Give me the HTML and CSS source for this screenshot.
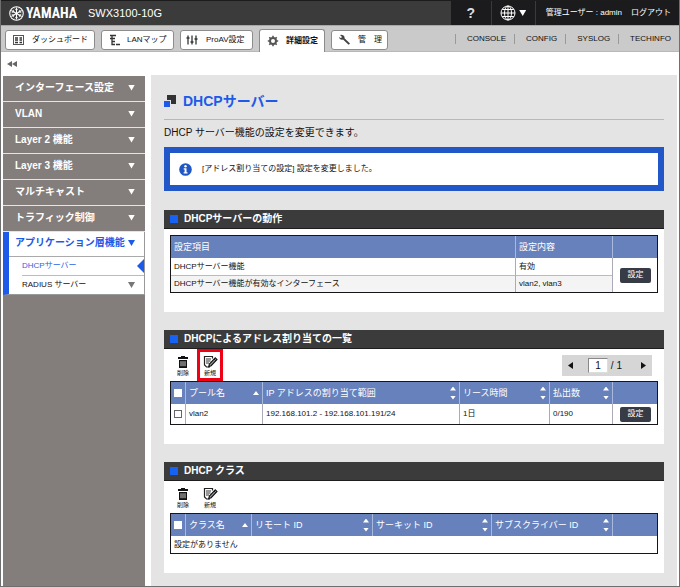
FILE: index.html
```html
<!DOCTYPE html>
<html lang="ja">
<head>
<meta charset="utf-8">
<title>SWX3100-10G DHCPサーバー</title>
<link rel="stylesheet" href="styles.css">
</head>
<body>
<svg class="defs" width="0" height="0" aria-hidden="true">
  <symbol id="trash" viewBox="0 0 12 12">
    <path d="M4 1V0h4v1h3v2H1V1z" fill="#111"/>
    <path d="M2 4h8v8H2z" fill="#111"/>
    <path d="M4 5.200v5M6 5.200v5M8 5.200v5" stroke="#fff" stroke-width=".8"/>
  </symbol>
  <symbol id="edit" viewBox="0 0 15 12">
    <path d="M9.500 2.500v-2h-8v8.500l2 2H7" fill="none" stroke="#222" stroke-width="1.200"/>
    <path d="M3 3h5M3 5h4.500M3 7h3" stroke="#333"/>
    <path d="M12.300 1.800l1.700 1.700-5.900 6.200-2.400.9.700-2.600z" fill="#999" stroke="#111" stroke-width="1.100"/>
    <path d="M11 3l1.800 1.800" stroke="#111"/>
  </symbol>
</svg>

<header class="topbar">
  <div class="brand">
    <svg class="brand-mark" viewBox="0 0 14 14" aria-hidden="true">
      <g fill="none" stroke="#fff">
        <circle cx="7" cy="7" r="6.300" stroke-width="1"/>
        <path d="M7 1.500v11M2.200 4.200l9.600 5.600M2.200 9.800l9.600-5.600" stroke-width="1"/>
        <path d="M5.500 2.500L7 4l1.500-1.500M5.500 11.500L7 10l1.500 1.500M2.500 6.200l2-.6-.4-2M11.500 6.200l-2-.6.4-2M2.500 7.800l2 .6-.4 2M11.500 7.800l-2 .6.4 2" stroke-width=".7"/>
      </g>
    </svg>
    <span class="brand-name">YAMAHA</span>
    <span class="model">SWX3100-10G</span>
  </div>
  <div class="tools">
    <button class="tool help" type="button" aria-label="ヘルプ">?</button>
    <button class="tool lang" type="button" aria-label="言語">
      <svg width="16" height="16" viewBox="0 0 16 16" fill="none" stroke="#fff" aria-hidden="true">
        <circle cx="8" cy="8" r="7"/><ellipse cx="8" cy="8" rx="3.500" ry="7"/>
        <path d="M8 1v14M1 8h14M2.200 4.500h11.600M2.200 11.500h11.600"/>
      </svg>
      <span class="tri down"></span>
    </button>
    <div class="user"><span>管理ユーザー : admin</span><a href="#">ログアウト</a></div>
  </div>
</header>

<nav class="tabs">
  <button class="tab dash" type="button">
    <svg width="12" height="12" viewBox="0 0 12 12" aria-hidden="true"><rect x=".5" y="1.500" width="10" height="9" fill="none" stroke="#555"/><path d="M2 4h3M6.500 4H9M2 6h3M6.500 6H9M2 8.500h3M6.500 8.500H9" stroke="#333" stroke-width="1.400"/></svg>
    ダッシュボード
  </button>
  <button class="tab lan" type="button">
    <svg width="12" height="12" viewBox="0 0 12 12" aria-hidden="true"><path d="M1 1.500h6M1 4.500h5M3 1.500v9h3M3 7.500h3M7 10.500h4" fill="none" stroke="#333" stroke-width="1.300"/></svg>
    LANマップ
  </button>
  <button class="tab pro" type="button">
    <svg width="12" height="12" viewBox="0 0 12 12" aria-hidden="true"><path d="M2 1.500v9M6 1.500v9M10 1.500v9M.5 4h3M4.500 8h3M8.500 5h3" stroke="#333" stroke-width="1.300"/></svg>
    ProAV設定
  </button>
  <button class="tab detail current" type="button">
    <svg width="12" height="12" viewBox="0 0 12 12" aria-hidden="true"><circle cx="6" cy="6" r="3" fill="none" stroke="#555" stroke-width="2"/><path d="M6 .8v2M6 9.200v2M.8 6h2M9.200 6h2M2.300 2.300l1.400 1.400M8.300 8.300l1.400 1.400M2.300 9.700l1.400-1.400M8.300 3.700l1.400-1.400" stroke="#555" stroke-width="1.600"/></svg>
    詳細設定
  </button>
  <button class="tab admin" type="button">
    <svg width="12" height="12" viewBox="0 0 12 12" aria-hidden="true"><path d="M4 1.200a3 3 0 0 0-3-.2l2 2-1.200 1.300L.3 2.700C0 5 2 6.300 4 5.600l5.600 5.200 1.400-1.300-5.500-5.300c.3-1.200-.2-2.400-1.500-3z" fill="#444"/></svg>
    管　理
  </button>
  <div class="links">
    <a href="#">CONSOLE</a><a href="#">CONFIG</a><a href="#">SYSLOG</a><a href="#">TECHINFO</a>
  </div>
</nav>

<div class="strip">
  <button class="collapse" type="button" aria-label="メニューを閉じる"><span class="tri left"></span><span class="tri left"></span></button>
</div>

<div class="layout">
  <nav class="sidebar">
    <button class="menu" type="button">インターフェース設定<span class="tri down"></span></button>
    <button class="menu" type="button">VLAN<span class="tri down"></span></button>
    <button class="menu" type="button">Layer 2 機能<span class="tri down"></span></button>
    <button class="menu" type="button">Layer 3 機能<span class="tri down"></span></button>
    <button class="menu" type="button">マルチキャスト<span class="tri down"></span></button>
    <button class="menu" type="button">トラフィック制御<span class="tri down"></span></button>
    <div class="open">
      <button class="menu active" type="button">アプリケーション層機能<span class="tri down"></span></button>
      <a class="sub selected" href="#">DHCPサーバー<span class="pointer"></span></a>
      <a class="sub" href="#">RADIUS サーバー<span class="tri down"></span></a>
    </div>
  </nav>

  <main class="content">
    <h1><svg width="12" height="12" viewBox="0 0 12 12" aria-hidden="true"><path d="M3 0h9v9H3z" fill="#333"/><path d="M0 5h7v7H0z" fill="#e4e4e4"/><path d="M0 6h6v6H0z" fill="#1d5ae8"/></svg>DHCPサーバー</h1>
    <p class="lead">DHCP サーバー機能の設定を変更できます。</p>
    <div class="notice" role="status">
      <svg width="13" height="13" viewBox="0 0 13 13" aria-hidden="true"><circle cx="6.500" cy="6.500" r="6.300" fill="#1f57c4"/><circle cx="6.500" cy="3.300" r="1.200" fill="#fff"/><path d="M4.700 5.300h2.800v4h1v1.200H4.600V9.300h1V6.500h-.9z" fill="#fff"/></svg>
      [アドレス割り当ての設定] 設定を変更しました。
    </div>

    <section class="panel">
      <h2>DHCPサーバーの動作</h2>
      <div class="body spaced">
        <table>
          <colgroup><col><col class="w-value"><col class="w-action"></colgroup>
          <thead><tr><th>設定項目</th><th>設定内容</th><th></th></tr></thead>
          <tbody>
            <tr><td>DHCPサーバー機能</td><td>有効</td><td class="action" rowspan="2"><button class="set" type="button">設定</button></td></tr>
            <tr class="alt"><td>DHCPサーバー機能が有効なインターフェース</td><td>vlan2, vlan3</td></tr>
          </tbody>
        </table>
      </div>
    </section>

    <section class="panel">
      <h2>DHCPによるアドレス割り当ての一覧</h2>
      <div class="body">
        <div class="toolbar">
          <button class="icon" type="button"><svg width="12" height="12"><use href="#trash"/></svg>削除</button>
          <button class="icon marked" type="button"><svg width="15" height="12"><use href="#edit"/></svg>新規</button>
          <div class="pager">
            <button type="button" aria-label="前のページ"><span class="tri left"></span></button>
            <label><input type="text" value="1" aria-label="ページ"> / 1</label>
            <button type="button" aria-label="次のページ"><span class="tri right"></span></button>
          </div>
        </div>
        <table class="list">
          <colgroup><col class="w-check"><col class="w-pool"><col><col class="w-lease"><col class="w-count"><col class="w-action"></colgroup>
          <thead><tr>
            <th class="check"><input type="checkbox" aria-label="すべて選択"></th>
            <th><div class="sort">プール名<span class="arrows"><span class="tri up"></span></span></div></th>
            <th><div class="sort">IP アドレスの割り当て範囲<span class="arrows"><span class="tri up"></span><span class="tri down"></span></span></div></th>
            <th><div class="sort">リース時間<span class="arrows"><span class="tri up"></span><span class="tri down"></span></span></div></th>
            <th><div class="sort">払出数<span class="arrows"><span class="tri up"></span><span class="tri down"></span></span></div></th>
            <th></th>
          </tr></thead>
          <tbody><tr class="tall">
            <td class="check"><input type="checkbox" aria-label="vlan2"></td>
            <td>vlan2</td><td>192.168.101.2 - 192.168.101.191/24</td><td>1日</td><td>0/190</td>
            <td class="action"><button class="set" type="button">設定</button></td>
          </tr></tbody>
        </table>
      </div>
    </section>

    <section class="panel">
      <h2>DHCP クラス</h2>
      <div class="body">
        <div class="toolbar">
          <button class="icon" type="button"><svg width="12" height="12"><use href="#trash"/></svg>削除</button>
          <button class="icon" type="button"><svg width="15" height="12"><use href="#edit"/></svg>新規</button>
        </div>
        <table class="list">
          <colgroup><col class="w-check"><col class="w-class"><col class="w-id"><col><col class="w-id"><col class="w-action"></colgroup>
          <thead><tr>
            <th class="check"><input type="checkbox" aria-label="すべて選択"></th>
            <th><div class="sort">クラス名<span class="arrows"><span class="tri up"></span></span></div></th>
            <th><div class="sort">リモート ID<span class="arrows"><span class="tri up"></span><span class="tri down"></span></span></div></th>
            <th><div class="sort">サーキット ID<span class="arrows"><span class="tri up"></span><span class="tri down"></span></span></div></th>
            <th><div class="sort">サブスクライバー ID<span class="arrows"><span class="tri up"></span><span class="tri down"></span></span></div></th>
            <th></th>
          </tr></thead>
          <tbody><tr><td colspan="6">設定がありません</td></tr></tbody>
        </table>
      </div>
    </section>
  </main>
</div>
</body>
</html>
```
FILE: styles.css
```css
* { box-sizing: border-box; }

body {
  margin: 0;
  min-height: 100vh;
  display: flex;
  flex-direction: column;
  border: 1px solid #6f6f6f;
  border-top: 0;
  background: #fff;
  color: #111;
  font: 8px/12px "Liberation Sans", "Noto Sans CJK JP", sans-serif;
}

button, input { font: inherit; color: inherit; margin: 0; padding: 0; }
button { border: 0; background: none; cursor: pointer; white-space: nowrap; }
a { color: inherit; text-decoration: none; white-space: nowrap; }
svg { flex: none; display: block; }
.defs { position: absolute; }

/* Triangles */
.tri { flex: none; width: 7px; height: 6px; background: currentColor; }
.down { clip-path: polygon(0 0, 100% 0, 50% 100%); }
.up { clip-path: polygon(50% 0, 100% 100%, 0 100%); }
.left { clip-path: polygon(100% 0, 100% 100%, 0 50%); }
.right { clip-path: polygon(0 0, 100% 50%, 0 100%); }

/* Top bar */
.topbar {
  height: 25px;
  display: flex;
  justify-content: space-between;
  border-top: 1px solid #1c1c1c;
  background: #3b3b3b;
  color: #fff;
}
.brand { display: flex; align-items: center; padding-left: 8px; }
.brand-mark { width: 15px; height: 15px; }
.brand-name {
  width: 50px;
  margin: 0 12px 0 2px;
  font: bold 14px/20px "Liberation Sans Narrow", "Roboto Condensed", "Liberation Sans", sans-serif;
}
.model { font-size: 11px; }
.tools { display: flex; background: #1b1b1d; }
.tool { display: flex; align-items: center; justify-content: center; gap: 3px; border-right: 1px solid #3a3a3c; }
.help { width: 41px; color: #ddd; font-size: 14px; font-weight: bold; }
.lang { width: 44px; }
.user { display: flex; align-items: center; gap: 9px; padding: 0 8px 0 10px; }

/* Tabs */
.tabs {
  height: 27px;
  display: flex;
  align-items: flex-end;
  gap: 6px;
  padding: 0 8px 0 4px;
  border-top: 1px solid #a8a8a8;
  border-bottom: 1px solid #b8b8b8;
  background: #cacaca;
}
.tab {
  height: 20px;
  display: flex;
  align-items: center;
  gap: 7px;
  margin-bottom: 1px;
  padding-left: 7px;
  border: 1px solid #8c8c8c;
  border-radius: 3px;
  background: #fff;
}
.dash { width: 90px; }
.lan, .pro { width: 73px; }
.lan { gap: 6px; }
.pro { gap: 8px; padding-left: 5px; }
.admin { width: 57px; }
.detail { width: 66px; font-weight: bold; }
.current {
  height: 23px;
  margin-bottom: -1px;
  border-bottom: 0;
  border-radius: 3px 3px 0 0;
}
.links { display: flex; align-self: center; margin-left: auto; line-height: 10px; }
.links a { padding: 0 8px 0 11px; border-left: 1px solid #999; }
.links a:last-child { padding-right: 0; }

.strip { height: 23px; padding: 9px 0 0 6px; }
.collapse { display: flex; color: #666; }
.collapse .tri { width: 5px; height: 6px; }

/* Page columns */
.layout { flex: 1; display: flex; gap: 6px; padding: 0 2px; }
.sidebar { flex: none; width: 142px; margin-top: 1px; background: #837e7c; }
.menu {
  width: 100%;
  height: 26px;
  display: flex;
  align-items: center;
  justify-content: space-between;
  padding: 0 10px 2px 12px;
  border-bottom: 1px solid #e4e4e4;
  color: #fff;
  font-size: 10px;
  font-weight: bold;
}
.open { border: 1px solid #999; border-width: 0 1px 1px 0; border-left: 6px solid #1d5ae8; background: #fff; }
.open .menu, .sub { padding-right: 9px; }
.open .menu { height: 25px; padding-left: 6px; border-color: #aaa; color: #1d5ae8; }
.sub {
  height: 18px;
  display: flex;
  align-items: center;
  justify-content: space-between;
  margin-left: 13px;
}
.sub .tri { color: #777; }
.sub.selected { height: 19px; padding-right: 0; border-bottom: 1px solid #bbb; color: #2b66de; }
.pointer { width: 7px; height: 14px; background: #1d5ae8; clip-path: polygon(100% 0, 100% 100%, 0 50%); }

.content { flex: 1; min-width: 0; padding: 12px 13px; background: #e4e4e4; }
h1 {
  height: 33px;
  display: flex;
  align-items: center;
  gap: 7px;
  margin: 0;
  padding-bottom: 4px;
  border-bottom: 1px solid #b5b8b5;
  color: #1d5ae8;
  font-size: 14px;
}
.lead { margin: 6px 0 7px; font-size: 10px; line-height: 14px; }
.notice {
  height: 44px;
  display: flex;
  align-items: center;
  gap: 10px;
  margin-bottom: 19px;
  padding-left: 9px;
  border: 6px solid #2257c8;
  background: #fff;
}

/* Panels */
.panel { margin-bottom: 18px; background: #fff; }
.panel:last-child { margin-bottom: 0; }
h2 {
  height: 19px;
  display: flex;
  align-items: center;
  gap: 6px;
  margin: 0;
  padding-left: 6px;
  border-bottom: 1px solid #1e1e1e;
  background: #3b3b3b;
  color: #fff;
  font-size: 10px;
}
h2::before { content: ""; width: 8px; height: 8px; background: #1762f2; }
.body { padding: 0 6px 19px; }
.spaced { padding-top: 6px; }

.toolbar { display: flex; gap: 1px; }
.icon {
  width: 26px;
  height: 32px;
  display: flex;
  flex-direction: column;
  align-items: center;
  justify-content: flex-end;
  border: 3px solid transparent;
  font-size: 6px;
  line-height: 10px;
}
.marked { border-color: #f00014; }
.pager {
  width: 90px;
  height: 21px;
  display: flex;
  align-items: center;
  justify-content: space-between;
  margin: 6px 6px 0 auto;
  padding: 0 6px;
  background: #d6d6d6;
  font-size: 10px;
}
.pager label { margin-right: 4px; }
.pager input {
  width: 20px;
  height: 15px;
  border: 1px solid #888;
  border-right-color: #ddd;
  border-bottom-color: #ddd;
  background: #fff;
  text-align: center;
}
.pager .tri { display: block; width: 5px; height: 7px; }

/* Tables */
table {
  width: 100%;
  table-layout: fixed;
  border: 1px solid #15151a;
  border-spacing: 0;
  background: #fff;
}
th, td { padding: 0 3px; border-left: 1px solid #aab; text-align: left; white-space: nowrap; }
th:first-child, td:first-child { border-left: 0; }
th { height: 22px; border-left-color: #a9b8dd; background: #6781bc; color: #fff; font-size: 9px; font-weight: normal; }
td { height: 17px; }
.tall td { height: 20px; }
.alt td { border-top: 1px solid #bbb; background: #f4f4f4; }
.action, .tall .action { padding: 0 7px; }
.w-value { width: 97px; }
.w-action { width: 45px; }
.w-check { width: 14px; }
.w-pool { width: 77px; }
.w-lease { width: 90px; }
.w-count { width: 63px; }
.w-class { width: 66px; }
.w-id { width: 121px; }

.sort { display: flex; align-items: center; justify-content: space-between; }
.arrows { display: grid; gap: 5px; }
.arrows .tri { width: 6px; height: 4px; }

.check { padding: 0 0 0 3px; }
input[type="checkbox"] {
  appearance: none;
  display: block;
  width: 8px;
  height: 8px;
  border: 1px solid #666;
  background: #fff;
}
th input[type="checkbox"] { border-color: #fff; }

.set {
  width: 31px;
  height: 15px;
  display: block;
  border-radius: 2px;
  background: #373b45;
  color: #fff;
}
```
